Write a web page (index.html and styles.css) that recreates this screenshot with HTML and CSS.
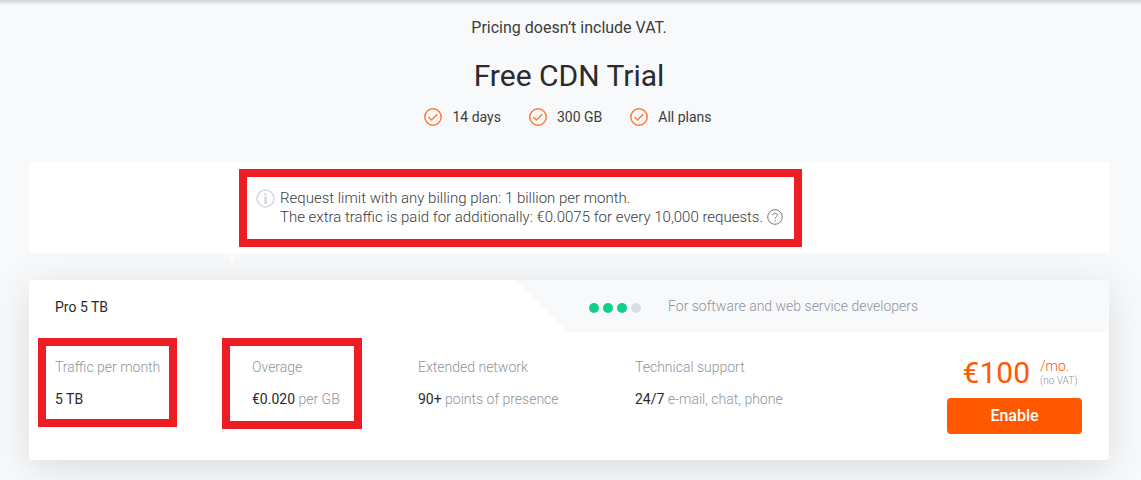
FILE: index.html
```html
<!DOCTYPE html>
<html lang="en">
<head>
<meta charset="utf-8">
<meta name="viewport" content="width=device-width, initial-scale=1">
<title>Free CDN Trial</title>
<link rel="stylesheet" href="styles.css">
</head>
<body>
<main class="page">
  <header class="intro">
    <p class="vat">Pricing doesn’t include VAT.</p>
    <h1 class="title">Free CDN Trial</h1>
    <ul class="perks">
      <li class="perk"><svg class="check" viewBox="0 0 18 18" aria-hidden="true"><circle cx="9" cy="9" r="8.2"/><path d="M4.5 9l3.1 3 5.6-5.7"/></svg>14 days</li>
      <li class="perk"><svg class="check" viewBox="0 0 18 18" aria-hidden="true"><circle cx="9" cy="9" r="8.2"/><path d="M4.5 9l3.1 3 5.6-5.7"/></svg>300 GB</li>
      <li class="perk"><svg class="check" viewBox="0 0 18 18" aria-hidden="true"><circle cx="9" cy="9" r="8.2"/><path d="M4.5 9l3.1 3 5.6-5.7"/></svg>All plans</li>
    </ul>
  </header>

  <section class="notice">
    <div class="notice-box">
      <svg class="info" viewBox="0 0 18 18" aria-hidden="true"><circle cx="9" cy="9" r="8"/><path d="M9 4v2M9 7.2v7"/></svg>
      <p class="notice-text">Request limit with any billing plan: 1 billion per month.<br>The extra traffic is paid for additionally: €0.0075 for every 10,000 requests.
        <svg class="help" viewBox="0 0 16 16" role="img" aria-label="Help"><circle cx="8" cy="8" r="7.3"/><path d="M5.8 6.3c0-1.3.9-2.1 2.2-2.1s2.2.8 2.2 2c0 1.5-2.1 1.7-2.1 3.6M8.1 11v1.2"/></svg></p>
    </div>
  </section>

  <article class="card">
    <div class="card-head">
      <h2 class="plan">Pro 5 TB</h2>
      <div class="audience">
        <div class="dots" role="img" aria-label="3 of 4"><i class="dot"></i><i class="dot"></i><i class="dot"></i><i class="dot dot-off"></i></div>
        <span>For software and web service developers</span>
      </div>
    </div>
    <div class="card-body">
      <dl class="feature marked"><dt>Traffic per month</dt><dd><b>5 TB</b></dd></dl>
      <dl class="feature marked marked-wide"><dt>Overage</dt><dd><b>€0.020</b> per GB</dd></dl>
      <dl class="feature"><dt>Extended network</dt><dd><b>90+</b> points of presence</dd></dl>
      <dl class="feature"><dt>Technical support</dt><dd><b>24/7</b> e-mail, chat, phone</dd></dl>
      <div class="buy">
        <div class="price"><span class="amount">€100</span><span class="period">/mo.<small class="tax">(no VAT)</small></span></div>
        <button class="enable" type="button">Enable</button>
      </div>
    </div>
  </article>
</main>
</body>
</html>
```
FILE: styles.css
```css
* { box-sizing: border-box; }
body {
  margin: 0;
  background: #f8f9fb linear-gradient(#d2d3d5, #f8f9fb) no-repeat 0 0 / 100% 5px;
  color: #2b2b2b;
  font: 300 14px/20px Roboto, "Liberation Sans", sans-serif;
}
h1, h2, p, ul, dl, dd { margin: 0; padding: 0; }
b { font-weight: 400; }
svg { fill: none; flex: none; }
.page { padding: 16px 32px 20px 29px; }
.intro { text-align: center; }
.vat { font-size: 16px; line-height: 24px; font-weight: 400; color: #3c3c3c; }
.title { margin-top: 16px; font-size: 30px; line-height: 40px; font-weight: 400; }
.perks {
  display: flex;
  justify-content: center;
  gap: 28px;
  margin-top: 11px;
  padding-right: 2px;
  list-style: none;
  font-weight: 400;
  color: #3c3c3c;
}
.perk { display: flex; align-items: center; gap: 10px; }
.check { width: 18px; height: 18px; stroke: #ff7a38; stroke-width: 1.5; }
.notice {
  position: relative;
  z-index: 1;
  display: flex;
  margin-top: 35px;
  padding: 7px 210px 6px;
  background: #fff;
}
.notice::after {
  content: "";
  position: absolute;
  top: 100%;
  left: 202px;
  width: 2px;
  height: 7px;
  background: #fff;
}
.notice-box {
  display: flex;
  gap: 5px;
  padding: 12px 11px 12px 9px;
  border: 8px solid #ee1c23;
}
.info { width: 19px; height: 19px; stroke: #d5dae2; stroke-width: 1.5; }
.info path { stroke-width: 2.5; }
.notice-text { font-size: 15px; line-height: 19px; white-space: nowrap; color: #3c3c3c; }
.help { width: 16px; height: 16px; vertical-align: -3px; stroke: #777c82; stroke-width: 1; }
.card {
  position: relative;
  margin-top: 27px;
  background: #fff;
  border-radius: 4px;
  box-shadow: 0 8px 40px rgba(0, 0, 0, .12);
}
.card-head { display: flex; height: 52px; }
.plan { flex: 492 1 0; padding: 17px 26px; font-size: 14px; line-height: 20px; font-weight: 400; }
.audience {
  display: flex;
  flex: 588 1 0;
  align-items: center;
  gap: 27px;
  padding-left: 73px;
  background: #f8f9fb;
  border-radius: 0 4px 0 0;
  clip-path: polygon(0 0, 100% 0, 100% 100%, 52px 100%);
  color: #8e959b;
}
.dots { display: flex; gap: 4px; padding-top: 3px; }
.dot { width: 10px; height: 10px; border-radius: 50%; background: #12ce88; }
.dot-off { background: #d9dde5; }
.card-body {
  display: grid;
  grid-template-columns: 197fr 166fr 217fr 312fr 135px;
  padding: 25px 27px 26px 26px;
  color: #8e959b;
}
.feature { justify-self: start; align-self: start; white-space: nowrap; }
.feature dd { margin-top: 12px; }
.feature b { color: #2b2b2b; }
.marked {
  margin: -19px -17px;
  padding: 11px 9px 10px;
  border: 8px solid #ee1c23;
}
.marked-wide { margin: -19px -30px; padding: 11px 14px 12px 22px; }
.price { display: flex; justify-content: center; gap: 10px; padding: 0 6px 0 17px; }
.amount { color: #ff5800; font-size: 30px; line-height: 32px; font-weight: 400; }
.period { color: #ff5800; line-height: 18px; }
.tax { display: block; color: #8e959b; font-size: 10px; line-height: 12px; white-space: nowrap; }
.enable {
  display: block;
  width: 100%;
  height: 36px;
  margin-top: 9px;
  border: 0;
  border-radius: 4px;
  background: #ff5800;
  color: #fff;
  font: 500 16px/20px Roboto, "Liberation Sans", sans-serif;
}
```
